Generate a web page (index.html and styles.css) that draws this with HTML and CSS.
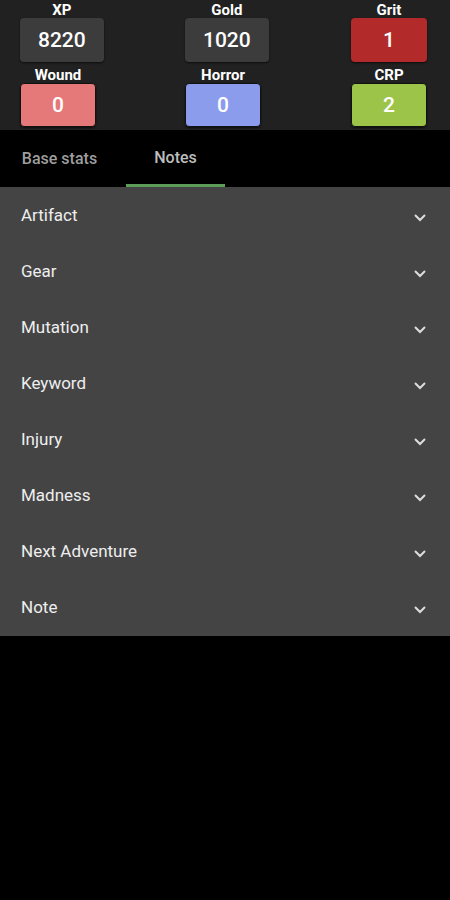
FILE: index.html
```html
<!DOCTYPE html>
<html lang="en">
<head>
    <meta charset="UTF-8">
    <meta name="viewport" content="width=device-width, initial-scale=1.0">
    <title>Character</title>
    <link rel="stylesheet" href="styles.css">
</head>
<body>
    <div class="stats">
        <div class="stat">
            <span class="stat-label">XP</span>
            <div class="stat-box">8220</div>
        </div>
        <div class="stat">
            <span class="stat-label">Gold</span>
            <div class="stat-box">1020</div>
        </div>
        <div class="stat">
            <span class="stat-label">Grit</span>
            <div class="stat-box grit">1</div>
        </div>
        <div class="stat">
            <span class="stat-label">Wound</span>
            <div class="stat-box wound">0</div>
        </div>
        <div class="stat">
            <span class="stat-label">Horror</span>
            <div class="stat-box horror">0</div>
        </div>
        <div class="stat">
            <span class="stat-label">CRP</span>
            <div class="stat-box crp">2</div>
        </div>
    </div>

    <div class="tabs">
        <div class="tab first">Base stats</div>
        <div class="tab active">Notes</div>
    </div>

    <ul class="sections">
        <li class="section">Artifact <svg class="chevron" viewBox="0 0 14 9"><path d="M2 2l5 5 5-5"/></svg></li>
        <li class="section">Gear <svg class="chevron" viewBox="0 0 14 9"><path d="M2 2l5 5 5-5"/></svg></li>
        <li class="section">Mutation <svg class="chevron" viewBox="0 0 14 9"><path d="M2 2l5 5 5-5"/></svg></li>
        <li class="section">Keyword <svg class="chevron" viewBox="0 0 14 9"><path d="M2 2l5 5 5-5"/></svg></li>
        <li class="section">Injury <svg class="chevron" viewBox="0 0 14 9"><path d="M2 2l5 5 5-5"/></svg></li>
        <li class="section">Madness <svg class="chevron" viewBox="0 0 14 9"><path d="M2 2l5 5 5-5"/></svg></li>
        <li class="section">Next Adventure <svg class="chevron" viewBox="0 0 14 9"><path d="M2 2l5 5 5-5"/></svg></li>
        <li class="section">Note <svg class="chevron" viewBox="0 0 14 9"><path d="M2 2l5 5 5-5"/></svg></li>
    </ul>
</body>
</html>
```

FILE: styles.css
```css
body {
    margin: 0;
    font-family: Roboto, 'Liberation Sans', sans-serif;
    background-color: #000;
    color: #fff;
}

.stats {
    display: grid;
    grid-template-columns: 165px 166px auto;
    row-gap: 5px;
    padding: 2px 0 3px 20px;
    background-color: #212121;
}

.stat {
    display: flex;
    flex-direction: column;
    align-items: center;
    justify-self: start;
}

.stat-label {
    font-size: 15px;
    font-weight: bold;
    line-height: 16px;
}

.stat-box {
    min-width: 76px;
    height: 44px;
    padding: 0 18px;
    box-sizing: border-box;
    display: flex;
    align-items: center;
    justify-content: center;
    font-size: 21px;
    font-weight: 500;
    border-radius: 4px;
    background-color: #3c3c3c;
    box-shadow: 0 1px 2px rgba(0, 0, 0, 0.6);
}

.stat-box.grit {
    background-color: #b22a2a;
}

.stat-box.wound {
    background-color: #e57878;
    border: 1px solid #111;
}

.stat-box.horror {
    background-color: #8a9ceb;
    border: 1px solid #111;
}

.stat-box.crp {
    background-color: #9cc449;
    border: 1px solid #111;
}

.tabs {
    display: flex;
    height: 57px;
    background-color: #000;
}

.tab {
    display: flex;
    align-items: center;
    justify-content: center;
    font-size: 16px;
    font-weight: 500;
    color: #9e9e9e;
    box-sizing: border-box;
}

.tab.first {
    width: 126px;
    padding-right: 7px;
}

.tab.active {
    width: 99px;
    color: #bdbdbd;
    padding-top: 1px;
    border-bottom: 3px solid #5e9c5a;
}

.sections {
    list-style: none;
    margin: 0;
    padding: 0 0 1px;
    background-color: #444;
}

.section {
    height: 56px;
    display: flex;
    align-items: center;
    justify-content: space-between;
    padding: 0 23px 0 21px;
    font-size: 17px;
    color: #eee;
}

.chevron {
    width: 14px;
    height: 9px;
    margin-top: 5px;
    fill: none;
    stroke: #ddd;
    stroke-width: 2;
}
```
